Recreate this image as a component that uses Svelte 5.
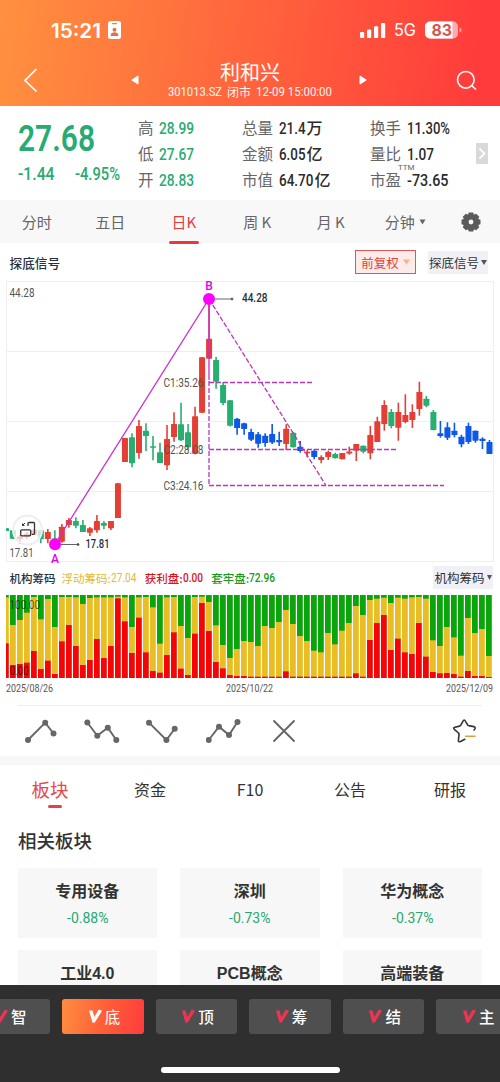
<script>
  const stats = [
    { g: true, w: 35, rows: [['高', '28.99', ''], ['低', '27.67', ''], ['开', '28.83', '']] },
    { rows: [['总量', '21.4', '万', 26.5], ['金额', '6.05', '亿', 26.5], ['市值', '64.70', '亿', 34.5]] },
    { rows: [['换手', '11.30%', '', 43], ['量比', '1.07', '', 27], ['市盈', '-73.65', '', 41.5]] }
  ];

  // [colour, high, body top, body bottom, low]
  const candles = [
    ['g', 528, 528.3, 531, 531], ['g', 530, 530.3, 538.7, 539], ['r', 535, 536.5, 539, 543.5], ['r', 532, 533.5, 536.5, 539],
    ['r', 529, 530, 535, 535], ['g', 530, 530.3, 539, 543.3], ['r', 529, 532, 539, 543.3], ['g', 530.3, 538.5, 545, 547],
    ['r', 524, 526.7, 541.7, 542.7], ['r', 518, 520, 525, 527.7], ['g', 517.3, 521, 525.7, 528.3], ['g', 520, 525, 532, 532],
    ['r', 527, 528.3, 532.7, 536], ['r', 515, 521, 530.3, 532.7], ['g', 521, 523, 525.7, 529.3], ['r', 521, 521, 528.3, 530],
    ['r', 483, 483.3, 518, 518], ['r', 438, 438, 462, 462], ['g', 433.3, 437.3, 463.3, 467.3], ['r', 420, 426, 453, 458.7],
    ['g', 423.3, 430.7, 436, 451], ['g', 436, 446.2, 447.8, 460.3], ['g', 442.7, 452.3, 463, 463], ['r', 425, 439, 465.3, 470],
    ['r', 412.3, 424, 437, 441.7], ['g', 402.7, 424.3, 440.3, 441], ['g', 424, 432.3, 447.3, 450], ['r', 406.7, 416.3, 453.7, 454.3],
    ['r', 357, 357.3, 412.7, 413], ['r', 299, 338.7, 358.7, 359], ['g', 357, 360, 381.7, 388.7], ['g', 382.3, 385, 403, 405.3],
    ['g', 400, 400.3, 425.7, 426.5], ['b', 418, 418.7, 428, 434.7], ['b', 422.7, 423.3, 429, 434.7], ['b', 428.7, 432, 439.7, 441],
    ['b', 432, 434.3, 443.7, 447.7], ['b', 433.3, 435.7, 443, 446.7], ['b', 424, 434, 442.5, 444], ['b', 431.7, 440, 442.3, 446],
    ['r', 424.3, 428.7, 444, 450], ['g', 432, 432.7, 447.3, 447.5], ['b', 441, 446.7, 451, 452.7], ['r', 450, 451.7, 453.3, 457.3],
    ['b', 449.3, 450.7, 457, 459.3], ['r', 455.3, 457, 460, 463.3], ['r', 450.7, 452, 457, 460], ['g', 452.7, 454, 458.3, 458.5],
    ['r', 453, 453, 459.3, 459.3], ['r', 446.7, 451.5, 453.5, 454.7], ['r', 444, 444, 450.7, 461], ['g', 445.5, 445.7, 451.7, 453.3],
    ['r', 426, 435, 453.3, 459.3], ['r', 416.7, 421.3, 442, 442], ['r', 400.3, 405, 424, 430.7], ['g', 409, 412, 426, 428.3],
    ['r', 402.7, 412, 427.7, 440.7], ['r', 394.3, 415, 422, 423.3], ['r', 404.3, 412, 420, 428], ['r', 381.7, 392, 409, 415.7],
    ['g', 396, 398.7, 405.7, 407.3], ['g', 410, 412, 430, 430.5], ['b', 421, 433.3, 436, 437.7], ['b', 422.3, 427.3, 437.7, 440],
    ['b', 422.7, 430.7, 435, 437.3], ['b', 434.7, 436.7, 444.3, 447.3], ['b', 422.7, 426, 442, 444], ['b', 430.5, 430.7, 440.7, 442.7],
    ['b', 437.3, 438.7, 441, 449], ['b', 440, 442, 454, 454]
  ];
  const fills = { r: '#e43f35', g: '#27ae70', b: '#0d58e8' };
  const cx = (i) => 12.8 + (i - 1) * 7.01;

  // share held by floating + profitable chips, then profitable alone, in thirds of a pixel
  const chips = [
    [242, 104], [159, 39], [174, 42], [196, 46], [243, 81], [176, 27], [237, 52], [153, 12], [243, 110], [243, 159],
    [242, 96], [222, 39], [240, 54], [242, 117], [242, 60], [242, 96], [244, 239], [242, 170], [153, 75], [242, 181],
    [243, 77], [212, 21], [103, 16], [242, 69], [243, 137], [156, 28], [120, 9], [243, 133], [244, 225], [228, 141],
    [158, 48], [99, 29], [60, 9], [87, 6], [111, 6], [108, 4], [96, 4], [156, 4], [150, 4], [168, 4],
    [204, 20], [162, 4], [126, 4], [111, 4], [82, 4], [77, 4], [135, 4], [101, 4], [142, 4], [165, 4],
    [216, 14], [189, 4], [234, 114], [238, 165], [241, 189], [225, 84], [241, 118], [238, 77], [242, 72], [243, 165],
    [238, 64], [113, 18], [96, 14], [153, 15], [122, 12], [67, 4], [180, 21], [135, 6], [147, 6], [66, 3]
  ];
  const tools = [
    { w: 32, p: [[3, 24], [20.2, 6.7], [28.5, 17.5]] },
    { w: 36, p: [[3.3, 6.5], [13.3, 19.7], [23.8, 11.7], [32.3, 24]] },
    { w: 33, p: [[3, 6.7], [20.4, 24], [28.7, 12.7]] },
    { w: 36, p: [[2.7, 24], [13, 10.7], [23, 19], [31.5, 6]] }
  ];
  const periods = ['分时', '五日', '日K', '周 K', '月 K'];
  const tabs = ['板块', '资金', 'F10', '公告', '研报'];
  const sectors = [['专用设备', '-0.88%'], ['深圳', '-0.73%'], ['华为概念', '-0.37%'], ['工业4.0', ''], ['PCB概念', ''], ['高端装备', '']];
  const nav = ['智', '底', '顶', '筹', '结', '主'];
</script>

{#snippet num(text, w, size, weight = 500)}
  <svg class="num" width={w} height={size * 1.2}><text x="0" y={size * 0.96} font-size={size} font-weight={weight} textLength={w} lengthAdjust="spacingAndGlyphs">{text}</text></svg>
{/snippet}

<div class="screen">
  <header>
    <div class="status">
      <span class="clock">{@render num('15:21', 50, 20.5, 600)}</span>
      <svg width="13" height="18" viewBox="0 0 13 18"><rect width="13" height="18" rx="2.5" fill="#fff" /><path d="M4.5 2.7h4" stroke="#ff7740" stroke-width="1.3" stroke-linecap="round" /><circle cx="6.5" cy="8.7" r="2" fill="#d9744c" /><path d="M2.7 15v-1c0-3.6 7.6-3.6 7.6 0v1z" fill="#d9744c" /></svg>
      <i class="grow"></i>
      <svg width="27" height="17" viewBox="0 0 27 17" fill="#fff"><rect x="1" y="10" width="4.2" height="6" rx="1" /><rect x="8" y="7.5" width="4.2" height="8.5" rx="1" /><rect x="15" y="4.2" width="4.2" height="11.8" rx="1" /><rect x="22" y="1" width="4.2" height="15" rx="1" /></svg>
      <span class="net">{@render num('5G', 22, 17, 400)}</span>
      <svg class="battery" width="37" height="18" viewBox="0 0 37 18"><rect width="33" height="17" y=".5" rx="5" fill="#ffabaa" /><path d="M5 .5h22.5v17H5a5 5 0 0 1-5-5v-7a5 5 0 0 1 5-5z" fill="#fff" /><path d="M34.5 6.5q2 .6 2 2.5t-2 2.5z" fill="#ffabaa" /><text x="6.5" y="14.8" font-size="16" font-weight="700" fill="#d9554e" textLength="20.5" lengthAdjust="spacingAndGlyphs">83</text></svg>
    </div>
    <div class="titlebar">
      <svg width="16" height="26" viewBox="0 0 16 26" fill="none" stroke="#fff" stroke-width="1.7"><path d="M13.5 2 2 13.5 13.5 24.5" /></svg>
      <svg class="prev" width="8" height="10" viewBox="0 0 8 10"><path d="M7 1v8L.8 5z" fill="#fff" stroke="#fff" stroke-linejoin="round" /></svg>
      <div class="name"><h1>利和兴</h1><p>{@render num('301013.SZ', 54, 12.5, 400)}<span>闭市</span>{@render num('12-09 15:00:00', 76, 12.5, 400)}</p></div>
      <svg class="next" width="8" height="10" viewBox="0 0 8 10"><path d="M1 1v8l6.2-4z" fill="#fff" stroke="#fff" stroke-linejoin="round" /></svg>
      <svg width="21" height="21" viewBox="0 0 21 21" fill="none" stroke="#fff" stroke-width="1.6"><circle cx="9.8" cy="9.8" r="8.3" /><path d="m15.5 15.5 4.5 4" /></svg>
    </div>
  </header>

  <section class="quote">
    <div class="price">
      {@render num('27.68', 77, 36, 600)}
      <div>{@render num('-1.44', 36.5, 17.5)}{@render num('-4.95%', 45, 17.5)}</div>
    </div>
    {#each stats as col}
      <dl class:up={col.g}>
        {#each col.rows as [k, v, unit, w]}
          <div><dt>{k}{#if k === '市盈'}<sup>TTM</sup>{/if}</dt><dd>{@render num(v, w ?? col.w, 16.5)}{unit}</dd></div>
        {/each}
      </dl>
    {/each}
    <svg class="more" width="12" height="21" viewBox="0 0 12 21"><path fill="#d9d9d9" d="M0 0h12v21H0z" /><path d="m3.4 5.3 5 5.2-5 5.2" fill="none" stroke="#fff" stroke-width="1.8" /></svg>
  </section>

  <nav class="periods">
    {#each periods as p, i}<span class:on={i === 2}>{p}</span>{/each}
    <span class="minutes">分钟<svg width="7" height="6"><path d="M.5.5h6l-3 5z" fill="#666" /></svg></span>
    <svg class="gear" width="20" height="20" viewBox="-10 -10 20 20"><g fill="#5b5b5b"><circle r="7.6" />{#each [0, 45, 90, 135, 180, 225, 270, 315] as a}<path transform="rotate({a})" d="M-3.3-6.5-2.2-9.5h4.4l1.1 3z" />{/each}</g><circle r="2.4" fill="#f8f8f8" /></svg>
  </nav>

  <div class="signal">
    <b>探底信号</b>
    <button class="adjust">前复权<svg width="7" height="6"><path d="M0 .5h7l-3.5 5z" fill="#f9b27e" /></svg></button>
    <button>探底信号<svg width="6" height="5"><path d="M0 0h6L3 5z" fill="#555" /></svg></button>
  </div>

  <svg class="chart" width="500" height="282" viewBox="0 281 500 282">
    <g stroke="#eeefef" fill="none"><path d="M6 281.5h488M6 351.5h488M6 421.5h488M6 491.5h488M6 561.5h488M6.5 281v281M493.5 281v281" /></g>
    <g fill="#555" font-size="12"><text x="9.5" y="296.5" textLength="25" lengthAdjust="spacingAndGlyphs">44.28</text><text x="9.5" y="557" textLength="24" lengthAdjust="spacingAndGlyphs">17.81</text></g>
    {#each candles as [c, hi, top, bottom, lo], i}
      <path d="M{i ? cx(i) : 7.5} {hi}V{lo}" stroke={fills[c]} stroke-width="1.6" />
      <rect x={i ? cx(i) - 3 : 6} y={top} width={i ? 6 : 3} height={bottom - top} rx=".6" fill={fills[c]} />
    {/each}
    <g fill="#555" font-size="12"><text x="163.5" y="387" textLength="40" lengthAdjust="spacingAndGlyphs">C1:35.26</text><text x="163.5" y="453.7" textLength="40" lengthAdjust="spacingAndGlyphs">C2:28.08</text><text x="163.5" y="490" textLength="40" lengthAdjust="spacingAndGlyphs">C3:24.16</text></g>
    <g fill="none" stroke="#b936bd" stroke-width="1.3"><path stroke="#c92fd0" d="M55 544 209 299V380" /><path stroke-dasharray="5 2" d="M209 381V485.5M209 382.5h103M209 449.5h187M209 485.5h235M209 299 326 485.5" /></g>
    <g fill="#f0f"><circle cx="55" cy="544.3" r="6" /><circle cx="209" cy="299" r="6" /></g>
    <g stroke="#666" fill="#333"><path d="M61 544.5h17M215 299h17" /><circle cx="78" cy="544.5" r="1" /><circle cx="232" cy="299" r="1" /></g>
    <g fill="#26303d" font-size="12" font-weight="500"><text x="85.5" y="548" textLength="24" lengthAdjust="spacingAndGlyphs">17.81</text><text x="242" y="302.3" textLength="25.5" lengthAdjust="spacingAndGlyphs">44.28</text></g>
    <g fill="#e300e9" font-size="12" font-weight="500" text-anchor="middle"><text x="55" y="562.5">A</text><text x="209" y="290">B</text></g>
    <circle cx="27.5" cy="530" r="14.5" fill="#fff" fill-opacity=".72" stroke="#eee" stroke-width="2" />
    <g fill="none" stroke="#333" stroke-width="1.3"><rect x="20.7" y="529.8" width="10" height="6" rx="1" /><path d="M28 526v-2.5q0-1 1-1h4.5q1 0 1 1v9.8q0 1-1 1H32" /><path d="m25 523-2.5 2.5v-2m0 2h2" stroke-width="1" /></g>
  </svg>

  <div class="signal sub">
    <b>机构筹码</b>
    <span class="y">浮动筹码:{@render num('27.04', 25.5, 12.5, 400)}</span><span class="r">获利盘:{@render num('0.00', 20, 12.5)}</span><span class="gr">套牢盘:{@render num('72.96', 26, 12.5)}</span>
    <button>机构筹码<svg width="5" height="5"><path d="M0 0h5L2.5 5z" fill="#555" /></svg></button>
  </div>

  <svg class="chips" width="500" height="83" viewBox="0 0 500 83">
    {#each chips as [y, r], i}
      {@const x = i ? Math.round(cx(i) - 3) : 6}
      {@const w = i ? 6 : 3}
      <rect {x} y="0" width={w} height="83" fill="#0aa50a" />
      <rect {x} y={83 - y / 3} width={w} height={y / 3} fill="#e8be24" />
      <rect {x} y={83 - r / 3} width={w} height={r / 3} fill="#f40606" />
      <rect x={x + w - 0.2} y="0" width="1.2" height="83" fill="#fff" />
    {/each}
    <g fill="#000" fill-opacity=".62" font-size="12"><text x="9.5" y="14.3" textLength="30.5" lengthAdjust="spacingAndGlyphs">100.00</text><text x="9.5" y="79.5" textLength="19" lengthAdjust="spacingAndGlyphs">0.00</text></g>
  </svg>
  <div class="dates">{@render num('2025/08/26', 47, 10.5, 400)}{@render num('2025/10/22', 47, 10.5, 400)}{@render num('2025/12/09', 47, 10.5, 400)}</div>

  <div class="tools">
    {#each tools as t}
      <svg width={t.w} height="30" fill="#666"><polyline points={t.p.join(' ')} fill="none" stroke="#666" stroke-width="1.9" />{#each t.p as [x, y]}<circle cx={x} cy={y} r="3" />{/each}</svg>
    {/each}
    <svg class="clear" width="24" height="24" viewBox="0 0 24 24" fill="none" stroke="#666" stroke-width="1.9" stroke-linecap="round"><path d="m2 2 20 20M22 2 2 22" /></svg>
    <i class="grow"></i>
    <svg width="26" height="26" viewBox="0 0 26 26" fill="none" stroke-linecap="round" stroke-linejoin="round"><path d="M12.8 21.3 8.5 23.5q-2.3.9-2.1-1.3l.7-5.8q-.1-.8-.6-1.4L2.3 11.3q-1.400-1.600.5-2.100l4.800-1.100q.8-.2 1.200-.9L10.900 3.300q1.300-2.500 2.600 0l2 3.400q.5.700 1.200.9l5 1q2.200.7 1.200 2.300l-.8 1.200" stroke="#333" stroke-width="1.6" /><path d="M13.5 18.2h9.5" stroke="#d6a13b" stroke-width="1.5" /></svg>
  </div>

  <main>
    <nav class="tabs">{#each tabs as t, i}<span class:on={i === 0}>{t}</span>{/each}</nav>
    <h2>相关板块</h2>
    <div class="cards">
      {#each sectors as [name, change]}<article><b>{name}</b>{#if change}{@render num(change, 41.5, 15.5, 400)}{/if}</article>{/each}
    </div>
  </main>

  <footer>
    <div class="modes">
      {#each nav as n, i}
        <button class:on={i === 1}><svg width="15" height="15" viewBox="0 0 15 15"><path d="M1 1.5h3.6L6.3 8 10.8.5 14 1.8 6.8 13.5 4.5 13.8z" fill={i === 1 ? '#fff' : '#ef3354'} /></svg>{n}</button>
      {/each}
    </div>
    <i class="home"></i>
  </footer>
</div>

<style>
  :global(body) { background: #fff; }
  .screen { width: 500px; height: 1082px; overflow: hidden; display: flex; flex-direction: column; background: #fff; color: #333; font-family: 'Noto Sans CJK SC', sans-serif; }
  .screen * { box-sizing: border-box; }
  h1, h2, p, dl, dd { margin: 0; }
  svg { flex: none; display: block; }
  svg text { font-family: Roboto, 'Noto Sans CJK SC', sans-serif; }
  .status svg text { font-family: Inter, sans-serif; }
  .num { fill: currentColor; overflow: visible; }
  .grow { flex: 1; }
  button { border: 0; padding: 0; font: inherit; color: inherit; display: flex; align-items: center; justify-content: center; }

  header { height: 106px; flex: none; color: #fff; background: linear-gradient(97deg, #ff913f 0%, #ff683d 45%, #ff3b3b 96%); }
  .status { height: 60px; display: flex; align-items: center; padding: 0 38px 0 50.5px; }
  .clock { margin-right: 7.5px; }
  .net { margin: 0 9px 0 8px; }
  .titlebar { height: 46px; display: flex; align-items: center; padding: 0 23px 5px 23px; }
  .titlebar > svg { margin-top: -1px; }
  .titlebar .prev { margin-left: 91.5px; }
  .name { width: 164px; margin: 1px 27px 0 29.5px; text-align: center; }
  .titlebar .next { margin: -1px auto 0 0; }
  h1 { font-size: 20px; line-height: 21px; font-weight: 400; }
  .name p { display: flex; align-items: center; justify-content: space-between; font-size: 12px; line-height: 19px; opacity: .93; }

  .quote { height: 94px; flex: none; display: grid; grid-template-columns: 120px 104px 128px 106px 12px; padding: 10px 0 0 18px; align-items: start; }
  .price { color: #27ab72; display: flex; flex-direction: column; }
  .price > div { display: flex; gap: 20px; margin-top: 4px; }
  dl { font-size: 15.5px; line-height: 25.8px; margin-top: -1px; }
  dl > div { display: flex; height: 25.8px; }
  dt { color: #666; width: 37px; position: relative; }
  .up dt { width: 21px; }
  dd { display: flex; align-items: center; gap: 1px; font-weight: 500; color: #2b2b2b; font-size: 16px; }
  .up dd { color: #27ab72; }
  sup { position: absolute; left: 28px; top: -5px; font: 8px/12px Roboto, sans-serif; }
  .more { margin-top: 27px; }

  .periods { height: 43px; flex: none; background: #f8f8f8; display: grid; grid-template-columns: repeat(5, 73.5px) 75.5px 1fr; align-items: center; color: #666; font-size: 15px; text-align: center; }
  .periods span { height: 43px; line-height: 43px; position: relative; }
  .periods .on { color: #e73b3b; }
  .periods .on::after { content: ''; position: absolute; left: 22px; bottom: -1px; width: 30px; height: 3px; border-radius: 2px; background: #e73b3b; }
  .minutes { display: flex; align-items: center; justify-content: center; gap: 4px; }
  .gear { margin-left: 18px; }

  .signal { height: 38px; flex: none; display: flex; align-items: center; padding: 0 12px 0 9.5px; font-size: 12.7px; }
  .signal b { font-weight: 500; color: #26303d; margin-right: auto; }
  .signal button { background: #f0f0f6; height: 23px; gap: 2px; width: 60px; font-size: 12.5px; margin-left: 12px; white-space: nowrap; }
  .signal .adjust { width: 61px; height: 24px; background: #fdebea; border: 1px solid #df5656; color: #e2403a; gap: 4px; }
  .signal.sub { height: 32px; font-size: 11.5px; padding: 0 7px 3px 9.5px; }
  .sub b { margin-right: 6px; }
  .sub span { display: flex; align-items: center; margin-right: 8.5px; font-weight: 500; white-space: nowrap; }
  .sub .y { color: #e3b92f; font-weight: 400; }
  .sub .r { color: #d6161b; }
  .sub .gr { color: #189b20; }
  .signal.sub button { margin-left: auto; }
  .chart, .chips { flex: none; }
  .dates { height: 27px; flex: none; display: flex; justify-content: space-between; padding: 4px 7px 0 6px; color: #555; }

  .tools { height: 51px; flex: none; margin: 0 18px; padding: 0 4px 0 7px; display: flex; align-items: center; gap: 26.6px; border-top: 1px solid #eee; }
  .clear { margin-left: 3.5px; }
  main { border-top: 9px solid #f7f7f7; height: 229px; flex: none; overflow: hidden; }
  .tabs { display: grid; grid-template-columns: repeat(5, 100px); text-align: center; font-size: 16px; height: 50px; line-height: 49px; }
  .tabs .on { color: #e5484a; font-size: 18.5px; position: relative; }
  .tabs .on::after { content: ''; position: absolute; left: 48px; bottom: 7px; width: 14px; height: 3.5px; border-radius: 2px; background: #d44; }
  h2 { margin: 11px 0 0 18px; font-size: 18.5px; line-height: 28px; font-weight: 500; }
  .cards { display: grid; grid-template-columns: repeat(3, 139.5px); column-gap: 23px; row-gap: 12px; grid-auto-rows: 70px; margin: 14px 0 0 17.5px; }
  article { background: #f7f7f7; display: flex; flex-direction: column; align-items: center; padding-top: 12px; color: #27a872; }
  article b { color: #333; font: 500 16px/24px 'Liberation Sans', 'Noto Sans CJK SC', sans-serif; font-weight: 600; margin-bottom: 4px; }

  footer { height: 97px; flex: none; background: #2f2f2f; padding-top: 14px; display: flex; flex-direction: column; }
  .modes { display: flex; gap: 12px; margin-left: -31.5px; }
  .modes button { width: 81.6px; height: 35px; flex: none; border-radius: 3px; background: #4f4f4f; color: #fff; font-size: 15.5px; gap: 2px; font-weight: 500; padding: 0 0 2px 2px; }
  .modes button svg { margin-top: 2px; }
  .modes .on { background: linear-gradient(100deg, #ff8e40, #ff6138 48%, #ff3c3c); font-weight: 400; }
  .home { width: 179px; height: 6px; border-radius: 3px; background: #fff; margin: 33px auto 0; }
</style>
